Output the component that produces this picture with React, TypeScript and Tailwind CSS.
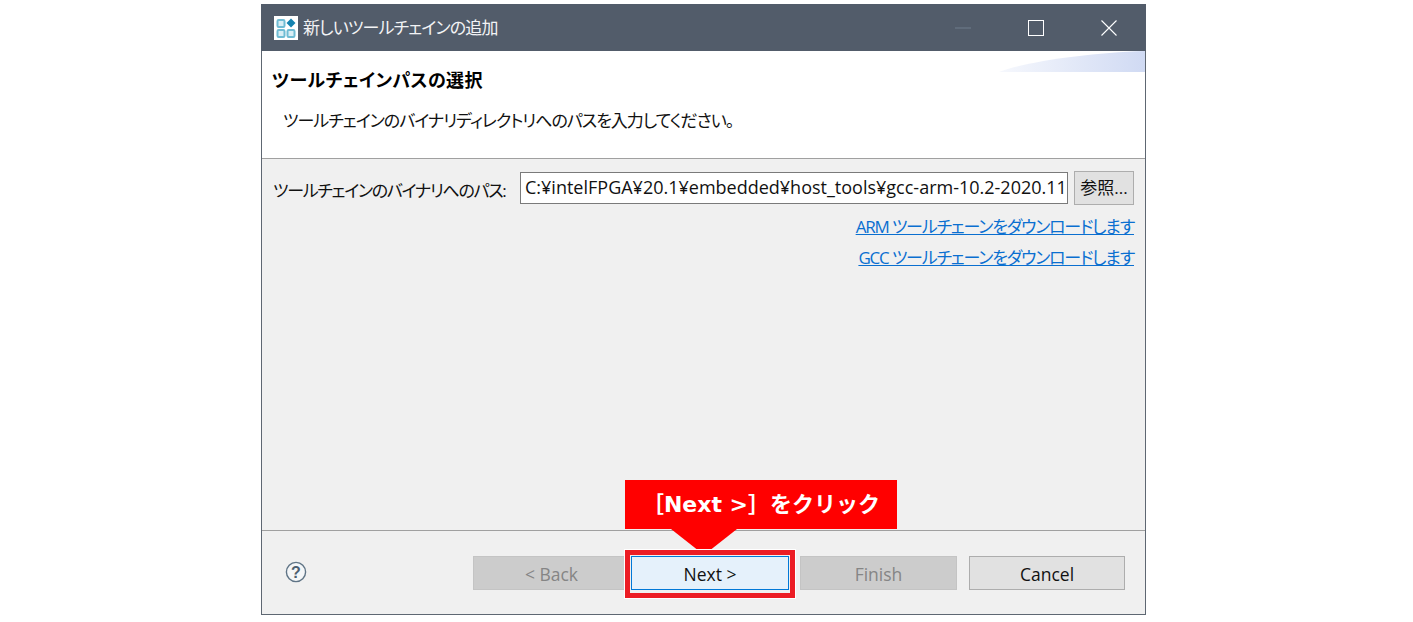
const font = "font-['Open_Sans','Noto_Sans_CJK_JP',sans-serif]";

const AppIcon = () => (
  <svg viewBox="0 0 24 24" className="w-[24px] h-[24px] bg-white shrink-0">
    <g fill="#d9eef5" stroke="#6fbcd4" strokeWidth="2">
      <rect x="3.5" y="4" width="7" height="7" rx="1.2" />
      <rect x="3.5" y="14" width="7" height="7" rx="1.2" />
      <rect x="13.5" y="14" width="7" height="7" rx="1.2" />
    </g>
    <path d="M17 2.5l4.5 4.5-4.5 4.5-4.5-4.5z" fill="#1583b0" />
  </svg>
);

const WindowButtons = () => (
  <div className="flex items-center">
    <svg viewBox="0 0 16 2" className="w-[16px] h-[2px] mr-[57px]">
      <rect width="16" height="1" y="0.5" fill="#6f7c8b" />
    </svg>
    <svg viewBox="0 0 16 16" className="w-[16px] h-[16px] mr-[57px]">
      <rect x="0.5" y="0.5" width="15" height="15" fill="none" stroke="#ffffff" />
    </svg>
    <svg viewBox="0 0 16 16" className="w-[16px] h-[16px] mr-[29px]">
      <path d="M0.5 0.5l15 15M15.5 0.5l-15 15" fill="none" stroke="#ffffff" strokeWidth="1.1" />
    </svg>
  </div>
);

const Swoosh = () => (
  <svg viewBox="0 0 146 21" className="absolute right-0 top-0 w-[146px] h-[21px]">
    <defs>
      <linearGradient id="sw" x1="0" x2="1" y1="0" y2="0">
        <stop offset="0" stopColor="#f6f8fd" />
        <stop offset="1" stopColor="#d0daf3" />
      </linearGradient>
    </defs>
    <path d="M0 21C30 10 90 2 146 0V21Z" fill="url(#sw)" />
  </svg>
);

const HelpIcon = () => (
  <svg viewBox="0 0 22 22" className="w-[22px] h-[22px]">
    <circle cx="11" cy="11" r="9.6" fill="#f4f6f8" stroke="#5f7486" strokeWidth="1.4" />
    <text x="11" y="16.5" textAnchor="middle" fontSize="16" fontWeight="700" fill="#4c5f70" fontFamily="'Liberation Sans',sans-serif">?</text>
  </svg>
);

export default function App() {
  return (
    <div className={`${font} w-[1413px] h-[622px] bg-white overflow-hidden pt-[4px] pl-[261px] [font-feature-settings:'palt']`}>
      <div className="relative w-[885px] h-[611px] flex flex-col border border-[#5e6772] border-t-0 bg-[#f0f0f0]">
        <header className="h-[47px] shrink-0 -mx-px bg-[#525c6a] flex items-center justify-between pl-[13px]">
          <div className="flex items-center gap-[5px]">
            <AppIcon />
            <span className="text-[17px] text-[#f2f3f5] tracking-[-0.85px]">新しいツールチェインの追加</span>
          </div>
          <WindowButtons />
        </header>

        <section className="relative h-[108px] shrink-0 bg-white border-b border-[#a0a0a0] pl-[10px]">
          <Swoosh />
          <h1 className="pt-[14px] text-[18px] leading-[30px] font-bold text-black tracking-[0.4px]">ツールチェインパスの選択</h1>
          <p className="pt-[10px] pl-[11px] text-[17px] leading-[32px] text-[#111] tracking-[-1px]">ツールチェインのバイナリディレクトリへのパスを入力してください。</p>
        </section>

        <main className="flex-1 px-[11px] pt-[12px] border-b border-[#a0a0a0]">
          <div className="flex items-center h-[34px]">
            <label className="w-[247px] shrink-0 pt-[6px] text-[17px] text-[#111] tracking-[-1.3px] whitespace-nowrap">ツールチェインのバイナリへのパス:</label>
            <div className="w-[548px] h-[32px] shrink-0 bg-white border border-[#7a7a7a] px-[4px] text-[18px] leading-[29px] text-[#111] whitespace-nowrap overflow-hidden">
              C:¥intelFPGA¥20.1¥embedded¥host_tools¥gcc-arm-10.2-2020.11
            </div>
            <button className="ml-[6px] w-[60px] h-[34px] shrink-0 bg-[#e1e1e1] border border-[#adadad] text-[17px] text-[#111] whitespace-nowrap">参照...</button>
          </div>
          <div className="flex flex-col items-end">
            <a className="mt-[9px] text-[17px] leading-[25px] text-[#0a6fd0] underline tracking-[-1.2px] whitespace-nowrap">ARM ツールチェーンをダウンロードします</a>
            <a className="mt-[6px] text-[17px] leading-[25px] text-[#0a6fd0] underline tracking-[-1.2px] whitespace-nowrap">GCC ツールチェーンをダウンロードします</a>
          </div>
        </main>

        <footer className="h-[83px] shrink-0 flex pl-[23px] pt-[25px]">
          <div className="h-[32px] flex items-center"><HelpIcon /></div>
          <div className="ml-[166px] flex text-[17.5px] leading-[34px]">
            <button className="w-[157px] h-[34px] bg-[#cccccc] border border-[#c4c4c4] text-[#858585]">&lt; Back</button>
            <button className="w-[158px] h-[34px] ml-px bg-[#e5f1fb] border border-[#0078d7] text-[#111]">Next &gt;</button>
            <button className="w-[157px] h-[34px] ml-[11px] bg-[#cccccc] border border-[#c4c4c4] text-[#858585]">Finish</button>
            <button className="w-[156px] h-[34px] ml-[12px] bg-[#e1e1e1] border border-[#adadad] text-[#111]">Cancel</button>
          </div>
        </footer>

        {/* annotation over the Next button */}
        <div className="absolute left-[363px] top-[476px] w-[272px] h-[49px] bg-[#ff0000] flex items-center justify-center text-white text-[22px] font-bold font-['DejaVu_Sans','Noto_Sans_CJK_JP',sans-serif] [font-feature-settings:normal] whitespace-nowrap">
          ［Next &gt;］をクリック
        </div>
        <svg viewBox="0 0 66 26" className="absolute left-[409px] top-[525px] w-[66px] h-[26px]">
          <path d="M0 0H66L33 26Z" fill="#ff0000" />
        </svg>
        <div className="absolute left-[363px] top-[546px] w-[170px] h-[48px] border-[5px] border-[#ec1c24] outline outline-1 outline-white pointer-events-none" />
      </div>
    </div>
  );
}
